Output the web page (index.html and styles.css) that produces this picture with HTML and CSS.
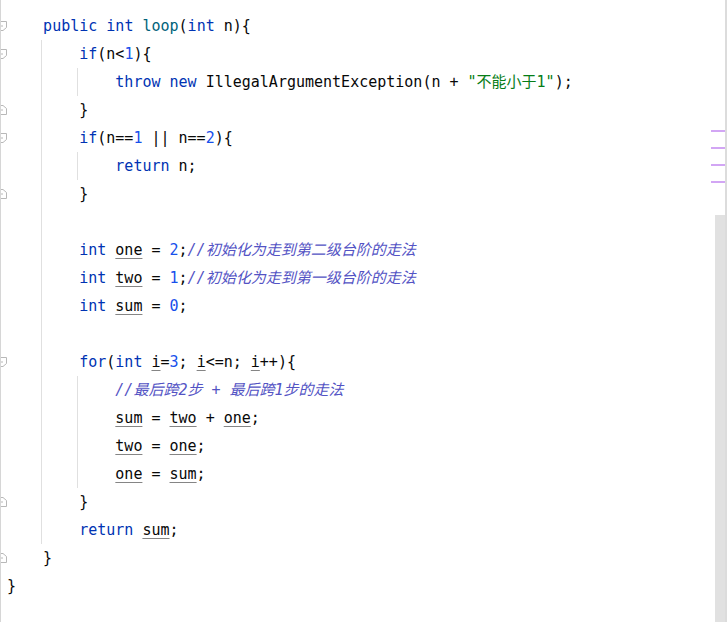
FILE: index.html
```html
<!DOCTYPE html>
<html>
<head>
<meta charset="utf-8">
<link rel="stylesheet" href="styles.css">
</head>
<body>
<div class="editor">
  <div class="main">
    <div class="ln"><span class="gut"><svg class="fold" viewBox="0 0 7 12" width="7" height="12"><path d="M0 1.5H6.5V7.5L3 10.5H0M0 6H3"/></svg></span><span class="code"><span class="ind"></span><span class="kw">public int</span> <span class="fn">loop</span>(<span class="kw">int</span> n){</span></div>
    <div class="ln"><span class="gut"><svg class="fold" viewBox="0 0 7 12" width="7" height="12"><path d="M0 1.5H6.5V7.5L3 10.5H0M0 6H3"/></svg></span><span class="code"><span class="ind"></span><span class="ind g"></span><span class="kw">if</span>(n&lt;<span class="num">1</span>){</span></div>
    <div class="ln"><span class="gut"></span><span class="code"><span class="ind"></span><span class="ind g"></span><span class="ind g"></span><span class="kw">throw new</span> IllegalArgumentException(n + <span class="str">"不能小于1"</span>);</span></div>
    <div class="ln"><span class="gut"><svg class="fold" viewBox="0 0 7 12" width="7" height="12"><path d="M0 10.5H6.5V4.5L3 1.5H0M0 6H3"/></svg></span><span class="code"><span class="ind"></span><span class="ind g"></span>}</span></div>
    <div class="ln"><span class="gut"><svg class="fold" viewBox="0 0 7 12" width="7" height="12"><path d="M0 1.5H6.5V7.5L3 10.5H0M0 6H3"/></svg></span><span class="code"><span class="ind"></span><span class="ind g"></span><span class="kw">if</span>(n==<span class="num">1</span> || n==<span class="num">2</span>){</span></div>
    <div class="ln"><span class="gut"></span><span class="code"><span class="ind"></span><span class="ind g"></span><span class="ind g"></span><span class="kw">return</span> n;</span></div>
    <div class="ln"><span class="gut"><svg class="fold" viewBox="0 0 7 12" width="7" height="12"><path d="M0 10.5H6.5V4.5L3 1.5H0M0 6H3"/></svg></span><span class="code"><span class="ind"></span><span class="ind g"></span>}</span></div>
    <div class="ln"><span class="gut"></span><span class="code"><span class="ind"></span><span class="ind g"></span></span></div>
    <div class="ln"><span class="gut"></span><span class="code"><span class="ind"></span><span class="ind g"></span><span class="kw">int</span> <span class="var">one</span> = <span class="num">2</span>;<span class="cmt">//初始化为走到第二级台阶的走法</span></span></div>
    <div class="ln"><span class="gut"></span><span class="code"><span class="ind"></span><span class="ind g"></span><span class="kw">int</span> <span class="var">two</span> = <span class="num">1</span>;<span class="cmt">//初始化为走到第一级台阶的走法</span></span></div>
    <div class="ln"><span class="gut"></span><span class="code"><span class="ind"></span><span class="ind g"></span><span class="kw">int</span> <span class="var">sum</span> = <span class="num">0</span>;</span></div>
    <div class="ln"><span class="gut"></span><span class="code"><span class="ind"></span><span class="ind g"></span></span></div>
    <div class="ln"><span class="gut"><svg class="fold" viewBox="0 0 7 12" width="7" height="12"><path d="M0 1.5H6.5V7.5L3 10.5H0M0 6H3"/></svg></span><span class="code"><span class="ind"></span><span class="ind g"></span><span class="kw">for</span>(<span class="kw">int</span> <span class="var">i</span>=<span class="num">3</span>; <span class="var">i</span>&lt;=n; <span class="var">i</span>++){</span></div>
    <div class="ln"><span class="gut"></span><span class="code"><span class="ind"></span><span class="ind g"></span><span class="ind g"></span><span class="cmt">//最后跨2步 + 最后跨1步的走法</span></span></div>
    <div class="ln"><span class="gut"></span><span class="code"><span class="ind"></span><span class="ind g"></span><span class="ind g"></span><span class="var">sum</span> = <span class="var">two</span> + <span class="var">one</span>;</span></div>
    <div class="ln"><span class="gut"></span><span class="code"><span class="ind"></span><span class="ind g"></span><span class="ind g"></span><span class="var">two</span> = <span class="var">one</span>;</span></div>
    <div class="ln"><span class="gut"></span><span class="code"><span class="ind"></span><span class="ind g"></span><span class="ind g"></span><span class="var">one</span> = <span class="var">sum</span>;</span></div>
    <div class="ln"><span class="gut"><svg class="fold" viewBox="0 0 7 12" width="7" height="12"><path d="M0 10.5H6.5V4.5L3 1.5H0M0 6H3"/></svg></span><span class="code"><span class="ind"></span><span class="ind g"></span>}</span></div>
    <div class="ln"><span class="gut"></span><span class="code"><span class="ind"></span><span class="ind g"></span><span class="kw">return</span> <span class="var">sum</span>;</span></div>
    <div class="ln"><span class="gut"><svg class="fold" viewBox="0 0 7 12" width="7" height="12"><path d="M0 10.5H6.5V4.5L3 1.5H0M0 6H3"/></svg></span><span class="code"><span class="ind"></span>}</span></div>
    <div class="ln"><span class="gut"></span><span class="code">}</span></div>
  </div>
  <div class="rail">
    <div class="mark"></div>
    <div class="mark"></div>
    <div class="mark"></div>
    <div class="mark"></div>
    <div class="thumb"></div>
  </div>
</div>
</body>
</html>
```

FILE: styles.css
```css
html, body {
  margin: 0;
  padding: 0;
  background: #ffffff;
}
body {
  width: 727px;
  height: 622px;
  overflow: hidden;
}
.editor {
  display: flex;
  height: 622px;
}
.main {
  flex: 1;
  padding-top: 12px;
  border-left: 1px solid #d6d6d6;
  box-sizing: border-box;
}
.ln {
  display: flex;
  height: 28px;
}
.gut {
  width: 6px;
  height: 28px;
  flex: none;
  display: flex;
  align-items: center;
  overflow: hidden;
}
.fold {
  display: block;
  margin-left: -1px;
}
.fold path {
  fill: none;
  stroke: #b8b8b8;
  stroke-width: 1;
}
.code {
  font-family: "DejaVu Sans Mono", "Noto Sans CJK SC", monospace;
  font-size: 15px;
  line-height: 28px;
  white-space: pre;
  color: #080808;
}
.ind {
  display: inline-block;
  width: 4ch;
  height: 28px;
  vertical-align: top;
}
.ind.g {
  border-left: 1px solid #e0e0e0;
  margin-left: -2px;
  width: calc(4ch + 1px);
}
.kw { color: #0033b3; }
.fn { color: #00627a; }
.num { color: #1750eb; }
.str { color: #067d17; }
.cmt {
  color: #5353c4;
  font-style: italic;
}
.var {
  text-decoration: underline;
  text-decoration-color: #858585;
  text-underline-offset: 3px;
  text-decoration-thickness: 1px;
}
.rail {
  width: 16px;
  flex: none;
  border-right: 2px solid #dcdcdc;
  box-sizing: border-box;
  display: flex;
  flex-direction: column;
  align-items: flex-start;
  padding-top: 130px;
}
.mark {
  width: 14px;
  height: 2px;
  background: #d2a6f4;
  margin-bottom: 15px;
}
.thumb {
  margin-top: 17px;
  margin-left: 4px;
  width: 10px;
  flex: 1;
  background: #e1e1e1;
}
```
